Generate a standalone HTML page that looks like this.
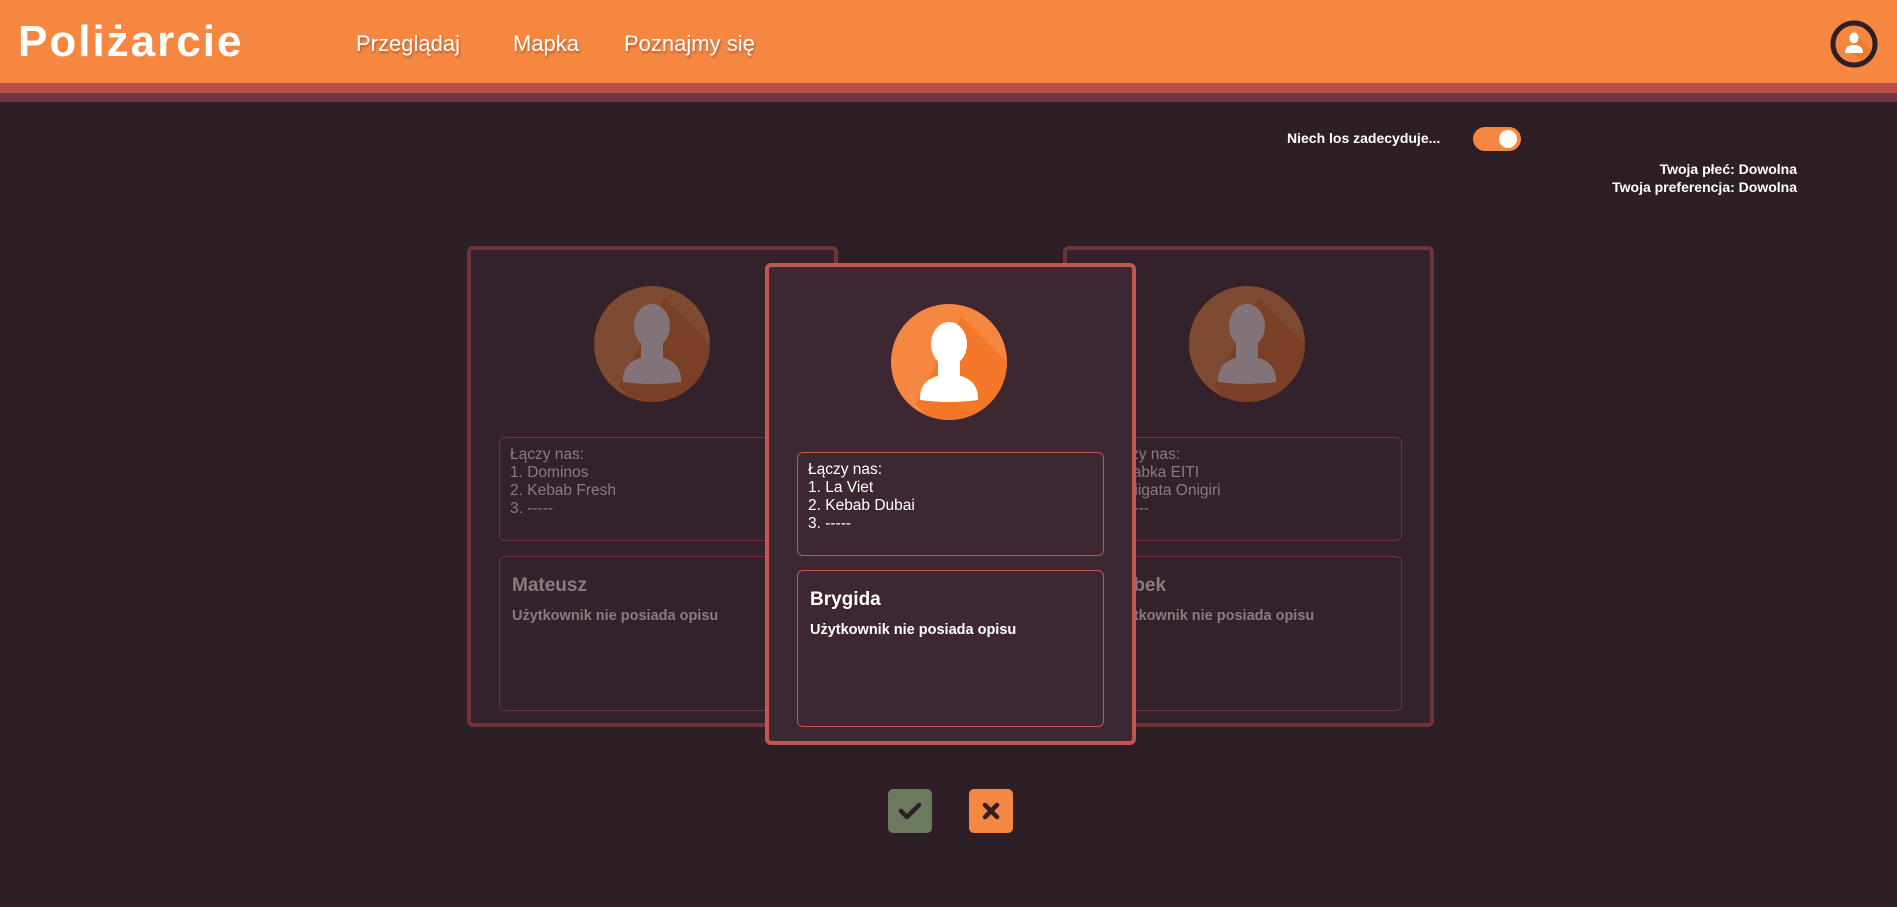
<!DOCTYPE html>
<html><head><meta charset="utf-8"><style>
*{margin:0;padding:0;box-sizing:border-box}
body{width:1897px;height:907px;background:#2e1f27;font-family:"Liberation Sans",sans-serif;position:relative;overflow:hidden}
.hdr{position:absolute;left:0;top:0;width:1897px;height:83px;background:#f68741}
.b1{position:absolute;top:83px;left:0;width:1897px;height:10px;background:#b85049}
.b2{position:absolute;top:93px;left:0;width:1897px;height:9px;background:#763546}
.logo{position:absolute;left:18px;top:17px;font-size:44px;font-weight:bold;color:#fff;letter-spacing:2px;font-family:"Liberation Sans",sans-serif}
.nav{position:absolute;top:31px;font-size:22px;color:#fff;text-shadow:1px 2px 2px rgba(0,0,0,.3)}
.card{position:absolute;border-radius:6px}
.side{top:246px;width:371px;height:481px;background:#33222b;border:4px solid #6e3435}
.mid{left:765px;top:263px;width:371px;height:482px;background:#3c2733;border:4px solid #c0584f}
.box{position:absolute;border-radius:6px;border:1px solid #c0584f;padding:8px 10px;font-size:15.5px;line-height:18px;color:#fff}
.side .box{border-color:#6e3435;color:#8a7a82}
.box h3{font-size:19px;margin:12px 0 12px 2px}
.box p{font-size:14.5px;font-weight:bold;margin-left:2px}
.av{position:absolute}
.btn{position:absolute;top:789px;width:44px;height:44px;border-radius:5px}
</style></head><body>
<div class="hdr"></div><div class="b1"></div><div class="b2"></div>
<div class="logo">Poliżarcie</div>
<div class="nav" style="left:356px">Przeglądaj</div>
<div class="nav" style="left:513px">Mapka</div>
<div class="nav" style="left:624px">Poznajmy się</div>
<svg style="position:absolute;left:1829px;top:19px" width="50" height="50" viewBox="0 0 50 50"><circle cx="25" cy="25" r="21" fill="#f68741" stroke="#2e1f27" stroke-width="5"/><path d="M25 14 L42 31 A18 18 0 0 1 32 41 L22 33Z" fill="#f07a2e"/><ellipse cx="25" cy="19" rx="4.5" ry="5.5" fill="#fff"/><path d="M16 34 Q16 26 25 26 Q34 26 34 34Z" fill="#fff"/></svg>

<div style="position:absolute;left:1287px;top:130px;color:#fff;font-size:14px;font-weight:bold">Niech los zadecyduje...</div>
<div style="position:absolute;left:1473px;top:127px;width:48px;height:24px;border-radius:12px;background:#f68741"><div style="position:absolute;right:4px;top:3px;width:18px;height:18px;border-radius:50%;background:#fff"></div></div>
<div style="position:absolute;right:100px;top:160px;color:#fff;font-size:14px;line-height:18px;text-align:right;font-weight:bold">Twoja płeć: Dowolna<br>Twoja preferencja: Dowolna</div>

<div class="card side" style="left:467px">
<svg class="av" style="left:123px;top:36px" width="116" height="116" viewBox="0 0 116 116"><defs><clipPath id="c1"><circle cx="58" cy="58" r="58"/></clipPath></defs><circle cx="58" cy="58" r="58" fill="#7e4a32"/><path d="M70 12 L130 72 L60 140 L25 100Z" fill="#7a3f24" clip-path="url(#c1)"/><ellipse cx="58" cy="40" rx="18" ry="22" fill="#827378"/><path d="M29 96 Q28 72 58 70 Q88 72 87 96 Q58 100 29 96Z" fill="#827378"/><rect x="47" y="55" width="22" height="20" fill="#827378"/></svg>
<div class="box" style="left:28px;top:187px;width:300px;height:104px">Łączy nas:<br>1. Dominos<br>2. Kebab Fresh<br>3. -----</div>
<div class="box" style="left:28px;top:306px;width:300px;height:155px"><h3>Mateusz</h3><p>Użytkownik nie posiada opisu</p></div>
</div>

<div class="card side" style="left:1063px">
<svg class="av" style="left:122px;top:36px" width="116" height="116" viewBox="0 0 116 116"><defs><clipPath id="c2"><circle cx="58" cy="58" r="58"/></clipPath></defs><circle cx="58" cy="58" r="58" fill="#7e4a32"/><path d="M70 12 L130 72 L60 140 L25 100Z" fill="#7a3f24" clip-path="url(#c2)"/><ellipse cx="58" cy="40" rx="18" ry="22" fill="#827378"/><path d="M29 96 Q28 72 58 70 Q88 72 87 96 Q58 100 29 96Z" fill="#827378"/><rect x="47" y="55" width="22" height="20" fill="#827378"/></svg>
<div class="box" style="left:28px;top:187px;width:307px;height:104px">Łączy nas:<br>1. Żabka EITI<br>2. Niigata Onigiri<br>3. -----</div>
<div class="box" style="left:28px;top:306px;width:307px;height:155px"><h3>Bobek</h3><p>Użytkownik nie posiada opisu</p></div>
</div>

<div class="card mid">
<svg class="av" style="left:122px;top:37px" width="116" height="116" viewBox="0 0 116 116"><defs><clipPath id="c3"><circle cx="58" cy="58" r="58"/></clipPath></defs><circle cx="58" cy="58" r="58" fill="#f68741"/><path d="M70 12 L130 72 L60 140 L25 100Z" fill="#f27729" clip-path="url(#c3)"/><ellipse cx="58" cy="40" rx="18" ry="22" fill="#fff"/><path d="M29 96 Q28 72 58 70 Q88 72 87 96 Q58 100 29 96Z" fill="#fff"/><rect x="47" y="55" width="22" height="20" fill="#fff"/></svg>
<div class="box" style="left:28px;top:185px;width:307px;height:104px">Łączy nas:<br>1. La Viet<br>2. Kebab Dubai<br>3. -----</div>
<div class="box" style="left:28px;top:303px;width:307px;height:157px"><h3>Brygida</h3><p>Użytkownik nie posiada opisu</p></div>
</div>

<div class="btn" style="left:888px;background:#6b7a5e"><svg width="44" height="44" viewBox="0 0 44 44"><path d="M13 22 L19 28 L31 16" stroke="#2e1f27" stroke-width="4.5" fill="none" stroke-linecap="round" stroke-linejoin="round"/></svg></div>
<div class="btn" style="left:969px;background:#f68741"><svg width="44" height="44" viewBox="0 0 44 44"><path d="M16 16 L28 28 M28 16 L16 28" stroke="#2e1f27" stroke-width="4.5" stroke-linecap="round"/></svg></div>
</body></html>
